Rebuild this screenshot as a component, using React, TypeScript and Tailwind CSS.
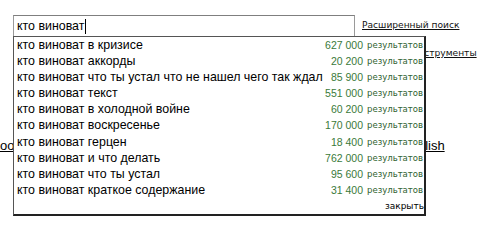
import React from "react";

const rows: [string, string][] = [
  ["кто виноват в кризисе", "627 000"],
  ["кто виноват аккорды", "20 200"],
  ["кто виноват что ты устал что не нашел чего так ждал", "85 900"],
  ["кто виноват текст", "551 000"],
  ["кто виноват в холодной войне", "60 200"],
  ["кто виноват воскресенье", "170 000"],
  ["кто виноват герцен", "18 400"],
  ["кто виноват и что делать", "762 000"],
  ["кто виноват что ты устал", "95 600"],
  ["кто виноват краткое содержание", "31 400"],
];

export default function App() {
  return (
    <div className="relative w-[480px] h-[252px] bg-white overflow-hidden font-['Liberation_Sans',Arial,sans-serif] text-black">
      {/* page behind */}
      <div className="flex flex-col pt-[15px]">
        <div className="flex items-start">
          <div className="ml-[13px] w-[342px] h-[22px] border border-[#9a9a9a] border-t-[#7f7f7f] flex items-center pl-[3px] text-[12.4px] leading-none">
            <span>кто виноват</span>
            <span className="w-px h-[15px] bg-black ml-px" />
          </div>
          <div className="ml-[7px] mt-[3px] flex flex-col whitespace-nowrap font-['DejaVu_Sans',Verdana,sans-serif] text-[9.1px] leading-[14px] underline text-[#111]">
            <span>Расширенный поиск</span>
            <span className="mt-[14px]">Языковые инструменты</span>
          </div>
        </div>
        <div className="mt-[78px] flex items-center text-[13px] leading-[16px] underline">
          <span className="w-[100px] overflow-hidden whitespace-nowrap">oogle.com.ua</span>
          <span className="ml-[302px]">English</span>
        </div>
      </div>

      {/* suggestion dropdown */}
      <div className="absolute left-[13px] top-[36px] w-[413px] h-[180px] bg-white border border-[#555] border-r-2 border-b-2 border-r-[#222] border-b-[#222] flex flex-col">
        {rows.map(([q, n]) => (
          <div key={q} className="h-[16.4px] flex items-center justify-between pl-[3px] pr-[1px] whitespace-nowrap">
            <span className="text-[12.4px] leading-none">{q}</span>
            <span className="flex items-center text-[#3a7a3a]">
              <span className="text-[10.5px] leading-none">{n}</span>
              <span className="ml-[4px] font-['DejaVu_Sans',Verdana,sans-serif] text-[8.5px] leading-none text-[#2f622f]">результатов</span>
            </span>
          </div>
        ))}
        <div className="h-[16px] flex items-center justify-end font-['DejaVu_Sans',Verdana,sans-serif] text-[9px] leading-none">
          закрыть
        </div>
      </div>
    </div>
  );
}
